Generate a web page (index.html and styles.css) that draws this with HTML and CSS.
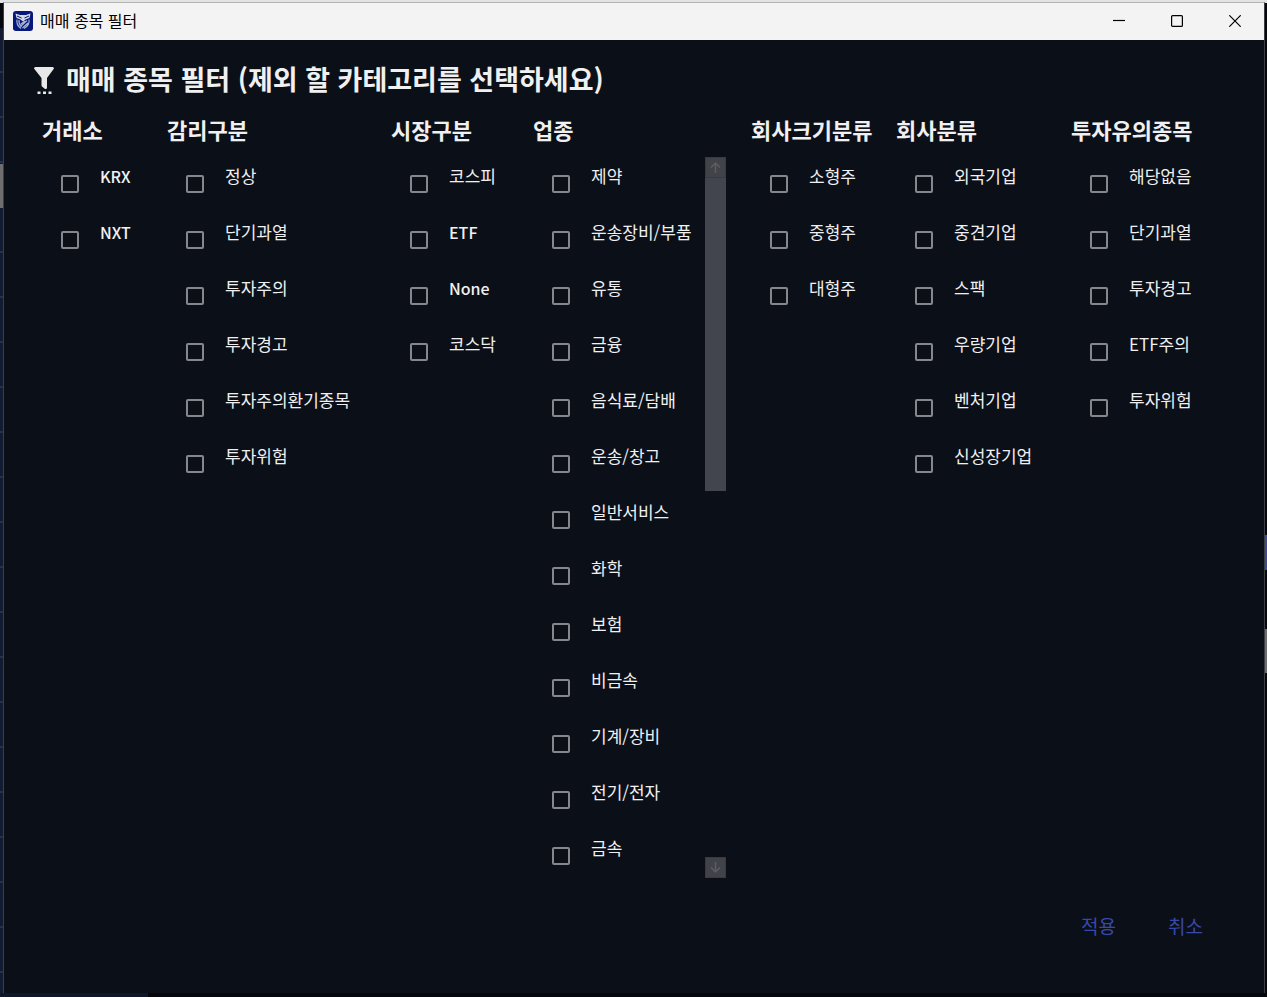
FILE: index.html
```html
<!DOCTYPE html>
<html lang="ko">
<head>
    <meta charset="UTF-8">
    <meta name="viewport" content="width=device-width, initial-scale=1.0">
    <title>매매 종목 필터</title>
    <link rel="stylesheet" href="styles.css">
</head>
<body>
    <main class="window">
        <header class="titlebar">
            <svg class="app_icon" viewBox="0 0 20 20">
                <rect width="20" height="20" rx="3" fill="#06187c"/>
                <path d="M2.5 2.5L7 4H13L17.5 2.5L16.5 7L12.5 8.5L10 10.5L7.500 8.500L3.500 7Z" fill="#d3d8e2"/>
                <path d="M4 5L8.500 7M16 5L11.500 7" stroke="#06187c"/>
                <path d="M4 8.500Q3 14 8 17.500M6 9Q5.500 13 8.500 16M16 8.500Q17 14 11 17.500M14 9.500L8 15M15 12L9.500 17M12 10L8 13" fill="none" stroke="#a9b4d2" stroke-width="1.200"/>
            </svg>
            <span class="app_name">매매 종목 필터</span>
            <div class="window_btns">
                <button type="button" aria-label="최소화"><svg viewBox="0 0 12 12"><path d="M0 5.500H12"/></svg></button>
                <button type="button" aria-label="최대화"><svg viewBox="0 0 12 12"><rect x="0.600" y="0.600" width="10.800" height="10.800" rx="1"/></svg></button>
                <button type="button" aria-label="닫기"><svg viewBox="0 0 12 12"><path d="M0.300 0.300L11.700 11.700M11.700 0.300L0.300 11.700"/></svg></button>
            </div>
        </header>
        <form class="content">
            <h1>
                <svg class="filter_icon" viewBox="0 0 20 28">
                    <path d="M0 1.500Q0 0 1.500 0H18.500Q20 0 20 1.500L13 11V20.500Q13 22.500 11 22L8 19.500Q7.500 19 7.500 18V11Z"/>
                    <path d="M3.500 24.500h3v2.500h-3zM9 24.500h3v2.500h-3zM14.500 24.500h3v2.500h-3z"/>
                </svg>
                매매 종목 필터 (제외 할 카테고리를 선택하세요)
            </h1>
            <div class="filters"></div>
            <div class="actions">
                <button type="submit">적용</button>
                <button type="button">취소</button>
            </div>
        </form>
    </main>

    <script src="script.js"></script>
</body>
</html>
```
FILE: styles.css
```css
*{
    margin:0;
    padding:0;
    box-sizing:border-box;
}
/* desktop that shows round the window */
body{
    min-height:100vh;
    padding:2px 2px 4px 3px;
    background:
        linear-gradient(#e2e2e2, #e2e2e2) 0 0 / 100% 3px no-repeat,
        linear-gradient(#6e6e6e, #6e6e6e) 0 164px / 3px 44px no-repeat,
        linear-gradient(#3f4a92, #3f4a92) 100% 535px / 2px 35px no-repeat,
        linear-gradient(#6e6e6e, #6e6e6e) 100% 629px / 2px 44px no-repeat,
        linear-gradient(#10172b, #10172b) 0 100% / 148px 4px no-repeat,
        repeating-linear-gradient(#131b30 0 43px, #24304f 43px 45px) 0 28px / 3px 100% no-repeat,
        #05070d;
    font-family:"Noto Sans CJK KR", sans-serif;
}
.window{
    min-height:calc(100vh - 6px);
    display:flex;
    flex-direction:column;
    border:1px solid #3c3f46;
    border-top-color:#b4b4b4;
    border-bottom:none;
    background-color:#0b0f18;
}
.titlebar{
    height:37px;
    padding-left:9px;
    display:flex;
    align-items:center;
    background-color:#f3f3f3;
    color:#000;
}
.app_icon{
    width:20px;
    height:20px;
    margin:0 7px 2px 0;
}
.app_name{
    padding-bottom:4px;
    font-size:16px;
    line-height:20px;
}
.window_btns{
    height:100%;
    padding-bottom:1px;
    margin-left:auto;
    display:flex;
}
.window_btns button{
    width:58px;
    border:none;
    background:none;
    display:flex;
    justify-content:center;
    align-items:center;
}
.window_btns svg{
    width:12px;
    height:12px;
    fill:none;
    stroke:#000;
    stroke-width:1.2;
}
.content{
    flex:1;
    padding:19px 30px 45px;
    display:flex;
    flex-direction:column;
    color:#f0f0f0;
}
h1{
    display:flex;
    align-items:center;
    gap:12px;
    font-size:27px;
    line-height:40px;
    font-weight:700;
}
.filter_icon{
    width:20px;
    height:28px;
    margin-top:3px;
    fill:#e8e8e8;
}
.filters{
    padding:12px 8px 0;
    display:grid;
    grid-template-columns:100px 199px 117px 193px 120px 150px 1fr;
    column-gap:25px;
}
.group{
    border:none;
    min-width:0;
}
.group legend{
    font-size:22px;
    line-height:36px;
    font-weight:700;
    white-space:nowrap;
}
.scroll_area{
    height:721px;
    margin-top:10px;
    display:flex;
    justify-content:space-between;
}
.list{
    flex:1;
    list-style:none;
    overflow:hidden;
}
.list li{
    height:56px;
    padding:0 0 2px 19px;
    display:flex;
    align-items:center;
    gap:21px;
}
.list input{
    appearance:none;
    width:18px;
    height:18px;
    border:2px solid #85878c;
    border-radius:2px;
}
.list label{
    align-self:flex-start;
    padding-top:7px;
    font-size:17px;
    line-height:24px;
    white-space:nowrap;
}
.list label.latin{
    font-size:16px;
    font-weight:500;
}
.scrollbar{
    width:21px;
    display:flex;
    flex-direction:column;
    justify-content:space-between;
}
.scrollbar button{
    width:21px;
    height:21px;
    border:1px solid #393a40;
    background-color:#424349;
    display:flex;
    justify-content:center;
    align-items:center;
}
.scrollbar svg{
    width:11px;
    height:11px;
    fill:none;
    stroke:#5c5d64;
    stroke-width:1.5;
}
.thumb{
    height:313px;
    margin-bottom:auto;
    background-color:#43454e;
}
.actions{
    margin-top:auto;
    padding-right:21px;
    display:flex;
    justify-content:flex-end;
    gap:32px;
}
.actions button{
    padding:0 10px;
    border:none;
    background:none;
    color:#3949ab;
    font:19px/44px "Noto Sans CJK KR", sans-serif;
}
```
FILE: script.js
```js
const groups = [
    { name: '거래소', items: ['KRX', 'NXT'] },
    { name: '감리구분', items: ['정상', '단기과열', '투자주의', '투자경고', '투자주의환기종목', '투자위험'] },
    { name: '시장구분', items: ['코스피', 'ETF', 'None', '코스닥'] },
    { name: '업종', scroll: true, items: ['제약', '운송장비/부품', '유통', '금융', '음식료/담배', '운송/창고', '일반서비스', '화학', '보험', '비금속', '기계/장비', '전기/전자', '금속'] },
    { name: '회사크기분류', items: ['소형주', '중형주', '대형주'] },
    { name: '회사분류', items: ['외국기업', '중견기업', '스팩', '우량기업', '벤처기업', '신성장기업'] },
    { name: '투자유의종목', items: ['해당없음', '단기과열', '투자경고', 'ETF주의', '투자위험'] }
];

const scrollbar = `
    <div class="scrollbar">
        <button type="button" aria-label="위로"><svg viewBox="0 0 11 11"><path d="M5.5 11V1M1 5.5L5.5 1L10 5.5"/></svg></button>
        <div class="thumb"></div>
        <button type="button" aria-label="아래로"><svg viewBox="0 0 11 11"><path d="M5.5 0V10M1 5.5L5.5 10L10 5.5"/></svg></button>
    </div>`;

// render filter columns
document.querySelector('.filters').innerHTML = groups.map((group, g) => `
    <fieldset class="group">
        <legend>${group.name}</legend>
        <div class="scroll_area">
            <ul class="list">
                ${group.items.map((item, i) => `
                    <li>
                        <input type="checkbox" id="f${g}_${i}">
                        <label for="f${g}_${i}" class="${/^[A-Za-z]+$/.test(item) ? 'latin' : ''}">${item}</label>
                    </li>`).join('')}
            </ul>
            ${group.scroll ? scrollbar : ''}
        </div>
    </fieldset>`).join('');
```
